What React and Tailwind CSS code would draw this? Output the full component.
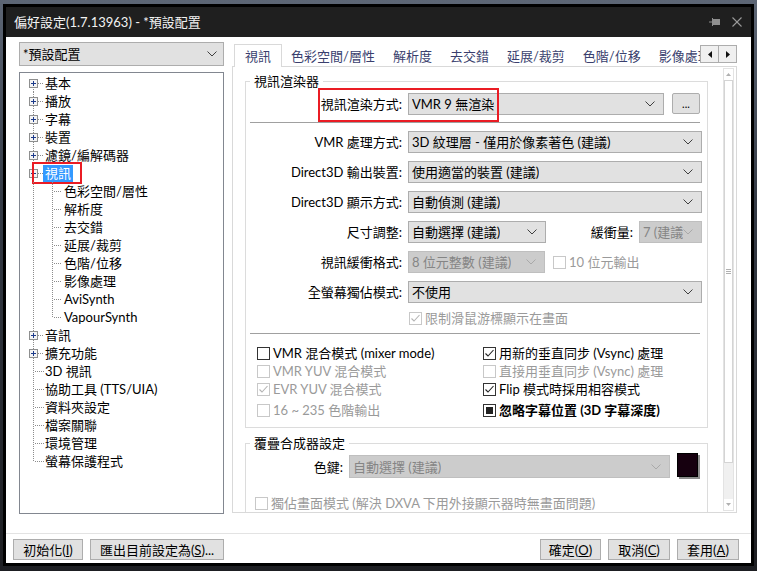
import React from 'react';

const FONT = "font-['Lato','Noto_Sans_CJK_TC',sans-serif]";

const treeItems = [
  { t: '基本', box: '+' },
  { t: '播放', box: '+' },
  { t: '字幕', box: '+' },
  { t: '裝置', box: '+' },
  { t: '濾鏡/編解碼器', box: '+' },
  { t: '視訊', box: '-', sel: true },
  { t: '色彩空間/層性', child: true },
  { t: '解析度', child: true },
  { t: '去交錯', child: true },
  { t: '延展/裁剪', child: true },
  { t: '色階/位移', child: true },
  { t: '影像處理', child: true },
  { t: 'AviSynth', child: true },
  { t: 'VapourSynth', child: true, lastChild: true },
  { t: '音訊', box: '+' },
  { t: '擴充功能', box: '+' },
  { t: '3D 視訊' },
  { t: '協助工具 (TTS/UIA)' },
  { t: '資料夾設定' },
  { t: '檔案關聯' },
  { t: '環境管理' },
  { t: '螢幕保護程式', last: true },
];

const tabs = ['色彩空間/層性', '解析度', '去交錯', '延展/裁剪', '色階/位移', '影像處理'];

function Chevron({ disabled }) {
  return (
    <svg width="10" height="6" viewBox="0 0 10 6" className="shrink-0">
      <polyline points="0.5,0.5 5,5 9.5,0.5" fill="none" stroke={disabled ? '#a9a9a9' : '#404040'} strokeWidth="1" />
    </svg>
  );
}

function Combo({ value, className = '', disabled }) {
  return (
    <div
      className={`flex h-[22px] items-center justify-between border pl-[3px] pr-[8px] ${
        disabled ? 'border-[#bfbfbf] bg-[#cccccc] text-[#858585]' : 'border-[#adadad] bg-[#e1e1e1] text-black'
      } ${className}`}
    >
      <span className="overflow-hidden whitespace-nowrap">{value}</span>
      <Chevron disabled={disabled} />
    </div>
  );
}

function Check({ state = 'off', disabled, bold, label, className = '' }) {
  return (
    <div className={`flex h-[18px] items-center gap-[3px] whitespace-nowrap ${className}`}>
      <span
        className={`flex h-[13px] w-[13px] shrink-0 items-center justify-center border bg-white ${
          disabled ? 'border-[#c8c8c8]' : 'border-[#333333]'
        }`}
      >
        {state === 'on' && (
          <svg width="11" height="11" viewBox="0 0 11 11">
            <polyline points="1.5,5.5 4,8 9.5,2" fill="none" stroke={disabled ? '#b4b4b4' : '#222222'} strokeWidth="1.1" />
          </svg>
        )}
        {state === 'mixed' && <span className="h-[7px] w-[7px] bg-[#222222]" />}
      </span>
      <span className={`${disabled ? 'text-[#9a9a9a]' : 'text-black'} ${bold ? 'font-bold' : ''}`}>{label}</span>
    </div>
  );
}

function TreeRow({ item }) {
  const dot = { stroke: '#8c8c8c', strokeDasharray: '1 1', strokeWidth: 1 };
  return (
    <div className="relative flex h-[18px] items-center">
      <svg width={item.child ? 44 : 25} height="18" className="shrink-0">
        <line x1="13.5" y1={item.t === '基本' ? 9 : 0} x2="13.5" y2={item.last ? 9 : 18} {...dot} />
        {item.child ? (
          <>
            <line x1="32.5" y1="0" x2="32.5" y2={item.lastChild ? 9.5 : 18} {...dot} />
            <line x1="34" y1="9.5" x2="42" y2="9.5" {...dot} />
          </>
        ) : (
          <line x1={item.box ? 18 : 15} y1="9.5" x2="24" y2="9.5" {...dot} />
        )}
        {item.box && (
          <>
            <rect x="9.5" y="5.5" width="8" height="8" fill="#f4f4f4" stroke="#8e8f8f" />
            <line x1="11" y1="9.5" x2="16" y2="9.5" stroke="#1c3a8a" />
            {item.box === '+' && <line x1="13.5" y1="7" x2="13.5" y2="12" stroke="#1c3a8a" />}
          </>
        )}
      </svg>
      {item.sel ? (
        <span className="-ml-[2px] bg-[#3399ff] px-[2px] leading-[17px] text-white">{item.t}</span>
      ) : (
        <span className="whitespace-nowrap text-black">{item.t}</span>
      )}
      {item.sel && <div className="absolute left-[12px] top-[-2px] h-[22px] w-[50px] border-2 border-[#ea1c24]" />}
    </div>
  );
}

function Btn({ children, className = '' }) {
  return (
    <div className={`flex h-[21px] items-center justify-center border border-[#adadad] bg-[#e1e1e1] text-black ${className}`}>
      {children}
    </div>
  );
}

export default function App() {
  return (
    <div className={`h-[571px] w-[757px] overflow-hidden bg-[linear-gradient(180deg,#5d6675_0%,#343a45_35%,#1d1e22_100%)] pl-[3px] pt-[4px] text-[13px] leading-[18px] ${FONT}`}>
      <div className="flex h-[562px] w-[751px] flex-col border-[3px] border-black bg-white">
        {/* Title bar */}
        <div className="flex h-[30px] shrink-0 items-center justify-between bg-[#1f1f1f] pl-[8px] pr-[9px]">
          <span className="text-[13px] text-[#f2f2f2]">偏好設定(1.7.13963) - *預設配置</span>
          <div className="flex items-center gap-[11px]">
            <svg width="12" height="10" viewBox="0 0 12 10">
              <line x1="0" y1="5" x2="3" y2="5" stroke="#8f8f8f" />
              <line x1="3.5" y1="1" x2="3.5" y2="9" stroke="#8f8f8f" />
              <rect x="4" y="2" width="7" height="6" fill="#8f8f8f" />
            </svg>
            <svg width="10" height="10" viewBox="0 0 10 10">
              <line x1="0.5" y1="0.5" x2="9.5" y2="9.5" stroke="#9a9a9a" strokeWidth="1.1" />
              <line x1="9.5" y1="0.5" x2="0.5" y2="9.5" stroke="#9a9a9a" strokeWidth="1.1" />
            </svg>
          </div>
        </div>

        {/* Main */}
        <div className="flex pl-[13px] pr-[14px] pt-[5px]">
          {/* Left column */}
          <div className="w-[205px] shrink-0">
            <div className="flex h-[24px] items-center justify-between border border-[#adadad] bg-[#e1e1e1] pl-[3px] pr-[6px]">
              <span>*預設配置</span>
              <Chevron />
            </div>
            <div className="mt-[6px] h-[442px] border border-[#828790] pt-[1px]">
              {treeItems.map(item => (
                <TreeRow key={item.t} item={item} />
              ))}
            </div>
          </div>

          {/* Right column */}
          <div className="ml-[8px] w-[505px]">
            <div className="relative flex h-[24px] items-end pl-[2px]">
              <div className="relative z-10 -mb-px flex h-[23px] items-center border border-b-0 border-[#d9d9d9] bg-white px-[10px] text-[#3a3f6e]">
                視訊
              </div>
              {tabs.map(t => (
                <div key={t} className="flex h-[21px] items-center whitespace-nowrap px-[9px] text-[#3a3f6e]">
                  {t}
                </div>
              ))}
              <div className="absolute right-0 top-[3px] z-20 flex">
                <div className="flex h-[18px] w-[19px] items-center justify-center border border-[#adadad] bg-[#f0f0f0]">
                  <svg width="4" height="7" viewBox="0 0 4 7"><polygon points="4,0 0,3.5 4,7" fill="#111" /></svg>
                </div>
                <div className="-ml-px flex h-[18px] w-[19px] items-center justify-center border border-[#adadad] bg-[#f0f0f0]">
                  <svg width="4" height="7" viewBox="0 0 4 7"><polygon points="0,0 4,3.5 0,7" fill="#111" /></svg>
                </div>
              </div>
            </div>

            <div className="flex h-[447px] border border-[#d9d9d9] bg-white">
              <div className="flex-1 overflow-hidden pl-[12px] pr-[15px] pt-[5px]">
                {/* 視訊渲染器 */}
                <fieldset className="border border-[#dcdcdc] pb-[8px] pl-[4px] pr-[5px]">
                  <legend className="px-[4px] leading-[18px]">視訊渲染器</legend>
                  <div className="relative mt-[3px] flex h-[22px] items-start">
                    <span className="w-[152px] shrink-0 pt-[2px] text-right">視訊渲染方式:</span>
                    <Combo value="VMR 9 無渲染" className="ml-[6px] w-[256px]" />
                    <Btn className="ml-[8px] h-[20px] w-[28px] rounded-[2px] text-[11px] leading-none">...</Btn>
                    <div className="absolute left-[68px] top-[-5px] h-[34px] w-[181px] border-2 border-[#ea1c24]" />
                  </div>
                  <div className="mt-[7px] h-px w-[450px] bg-[#a0a0a0]" />

                  <div className="mt-[8px] flex h-[22px] items-center">
                    <span className="w-[152px] shrink-0 text-right">VMR 處理方式:</span>
                    <Combo value="3D 紋理層 - 僅用於像素著色 (建議)" className="ml-[6px] flex-1" />
                  </div>
                  <div className="mt-[8px] flex h-[22px] items-center">
                    <span className="w-[152px] shrink-0 text-right">Direct3D 輸出裝置:</span>
                    <Combo value="使用適當的裝置 (建議)" className="ml-[6px] flex-1" />
                  </div>
                  <div className="mt-[8px] flex h-[22px] items-center">
                    <span className="w-[152px] shrink-0 text-right">Direct3D 顯示方式:</span>
                    <Combo value="自動偵測 (建議)" className="ml-[6px] flex-1" />
                  </div>
                  <div className="mt-[8px] flex h-[22px] items-center">
                    <span className="w-[152px] shrink-0 text-right">尺寸調整:</span>
                    <Combo value="自動選擇 (建議)" className="ml-[6px] w-[138px]" />
                    <span className="flex-1 pr-[6px] text-right">緩衝量:</span>
                    <Combo value="7 (建議" disabled className="w-[63px] pr-[6px]" />
                  </div>
                  <div className="mt-[8px] flex h-[22px] items-center">
                    <span className="w-[152px] shrink-0 text-right">視訊緩衝格式:</span>
                    <Combo value="8 位元整數 (建議)" disabled className="ml-[6px] w-[137px]" />
                    <Check label="10 位元輸出" disabled className="ml-[8px]" />
                  </div>
                  <div className="mt-[8px] flex h-[22px] items-center">
                    <span className="w-[152px] shrink-0 text-right">全螢幕獨佔模式:</span>
                    <Combo value="不使用" className="ml-[6px] flex-1" />
                  </div>
                  <Check label="限制滑鼠游標顯示在畫面" state="on" disabled className="ml-[159px] mt-[6px]" />
                  <div className="mt-[6px] h-px w-[450px] bg-[#a0a0a0]" />

                  <div className="mt-[10px] pl-[7px]">
                    <div className="grid grid-cols-[226px_1fr]">
                      <Check label="VMR 混合模式 (mixer mode)" />
                      <Check label="用新的垂直同步 (Vsync) 處理" state="on" />
                    </div>
                    <div className="grid grid-cols-[226px_1fr]">
                      <Check label="VMR YUV 混合模式" disabled />
                      <Check label="直接用垂直同步 (Vsync) 處理" disabled />
                    </div>
                    <div className="grid grid-cols-[226px_1fr]">
                      <Check label="EVR YUV 混合模式" state="on" disabled />
                      <Check label="Flip 模式時採用相容模式" state="on" />
                    </div>
                    <div className="mt-[3px] grid grid-cols-[226px_1fr]">
                      <Check label="16 ~ 235 色階輸出" disabled />
                      <Check label="忽略字幕位置 (3D 字幕深度)" state="mixed" bold />
                    </div>
                  </div>
                </fieldset>

                {/* 覆疊合成器設定 */}
                <fieldset className="mt-[6px] border border-[#dcdcdc] pb-[20px] pl-[4px] pr-[5px]">
                  <legend className="px-[4px] leading-[18px]">覆疊合成器設定</legend>
                  <div className="mt-[3px] flex h-[23px] items-center">
                    <span className="w-[93px] shrink-0 text-right">色鍵:</span>
                    <Combo value="自動選擇 (建議)" disabled className="ml-[6px] h-[23px] w-[321px]" />
                    <div className="-mt-[3px] ml-[7px] h-[24px] w-[21px] border border-black bg-[#16000f] shadow-[2px_2px_0_#8c8c8c]" />
                  </div>
                  <Check label="獨佔畫面模式 (解決 DXVA 下用外接顯示器時無畫面問題)" disabled className="ml-[5px] mt-[16px]" />
                </fieldset>
              </div>

              {/* scrollbar */}
              <div className="my-px mr-[2px] flex w-[11px] flex-col border border-[#e3e3e3] bg-[#f0f0f0]">
                <div className="flex h-[11px] items-center justify-center bg-white">
                  <svg width="5" height="3" viewBox="0 0 5 3"><polygon points="0,3 2.5,0 5,3" fill="#b0b0b0" /></svg>
                </div>
                <div className="flex h-[383px] items-center justify-center border border-[#d4d4d4] bg-white">
                  <svg width="5" height="5" viewBox="0 0 5 5">
                    <line x1="0" y1="0.5" x2="5" y2="0.5" stroke="#b0b0b0" />
                    <line x1="0" y1="2.5" x2="5" y2="2.5" stroke="#b0b0b0" />
                    <line x1="0" y1="4.5" x2="5" y2="4.5" stroke="#b0b0b0" />
                  </svg>
                </div>
                <div className="flex-1" />
                <div className="flex h-[11px] items-center justify-center bg-white">
                  <svg width="5" height="3" viewBox="0 0 5 3"><polygon points="0,0 2.5,3 5,0" fill="#b0b0b0" /></svg>
                </div>
              </div>
            </div>
          </div>
        </div>

        {/* Footer */}
        <div className="mt-[19px] flex border-t border-[#e3e3e3] pl-[7px] pr-[12px] pt-[5px]">
          <Btn className="w-[70px]">初始化(<u>I</u>)</Btn>
          <Btn className="ml-[7px] w-[134px]">匯出目前設定為(<u>S</u>)...</Btn>
          <div className="flex-1" />
          <Btn className="w-[61px]">確定(<u>O</u>)</Btn>
          <Btn className="ml-[7px] w-[62px]">取消(<u>C</u>)</Btn>
          <Btn className="ml-[7px] w-[62px]">套用(<u>A</u>)</Btn>
        </div>
      </div>
    </div>
  );
}
